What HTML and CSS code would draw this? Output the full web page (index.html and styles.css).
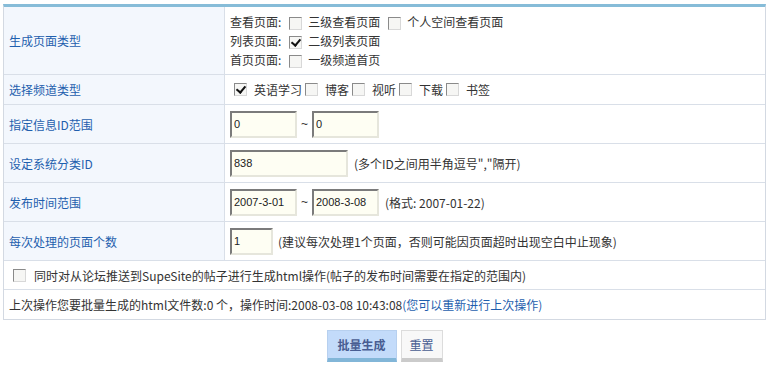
FILE: index.html
```html
<!DOCTYPE html>
<html lang="zh-CN">
<head>
<meta charset="utf-8">
<title>批量生成HTML</title>
<link rel="stylesheet" href="styles.css">
</head>
<body>
<div class="page">
  <div class="form">
    <div class="label r1">生成页面类型</div>
    <div class="field r1 stack">
      <div class="line">查看页面: <label class="opt"><input type="checkbox" class="cb">三级查看页面</label><label class="opt"><input type="checkbox" class="cb">个人空间查看页面</label></div>
      <div class="line">列表页面: <label class="opt"><input type="checkbox" class="cb" checked>二级列表页面</label></div>
      <div class="line">首页页面: <label class="opt"><input type="checkbox" class="cb">一级频道首页</label></div>
    </div>

    <div class="label r2">选择频道类型</div>
    <div class="field r2 channels">
      <label class="ch"><input type="checkbox" class="cb" checked>英语学习</label>
      <label class="ch"><input type="checkbox" class="cb">博客</label>
      <label class="ch"><input type="checkbox" class="cb">视听</label>
      <label class="ch"><input type="checkbox" class="cb">下载</label>
      <label class="ch"><input type="checkbox" class="cb">书签</label>
    </div>

    <div class="label r3">指定信息ID范围</div>
    <div class="field r3"><input class="txt w67" value="0"><span class="tilde">~</span><input class="txt w67" value="0"></div>

    <div class="label r3">设定系统分类ID</div>
    <div class="field r3"><input class="txt w118" value="838"><span class="hint">(多个ID之间用半角逗号","隔开)</span></div>

    <div class="label r3">发布时间范围</div>
    <div class="field r3"><input class="txt w67" value="2007-3-01"><span class="tilde">~</span><input class="txt w67" value="2008-3-08"><span class="hint h2">(格式: 2007-01-22)</span></div>

    <div class="label r3">每次处理的页面个数</div>
    <div class="field r3"><input class="txt w43" value="1"><span class="hint h3">(建议每次处理1个页面，否则可能因页面超时出现空白中止现象)</span></div>

    <div class="full r7"><label class="opt first"><input type="checkbox" class="cb">同时对从论坛推送到SupeSite的帖子进行生成html操作(帖子的发布时间需要在指定的范围内)</label></div>

    <div class="full r8 last">上次操作您要批量生成的html文件数:0 个，操作时间:2008-03-08 10:43:08 <a href="#" class="link">(您可以重新进行上次操作)</a></div>
  </div>

  <div class="actions">
    <button type="button" class="btn primary">批量生成</button>
    <button type="button" class="btn reset">重置</button>
  </div>
</div>
</body>
</html>
```

FILE: styles.css
```css
* { box-sizing: border-box; }
html, body { margin: 0; padding: 0; background: #fff; }
body {
  font-family: "Noto Sans CJK SC", "Liberation Sans", sans-serif;
  font-size: 12px;
  color: #333;
}
.page { padding: 4px 3px; }

.form {
  display: grid;
  grid-template-columns: 221px 1fr;
  border: 1px solid #d3d9e2;
  border-top: 3px solid #86bcd8;
}
.label {
  background: #f3f7fd;
  color: #1f5fae;
  border-right: 1px solid #d9dfe8;
  border-bottom: 1px solid #d9dfe8;
  padding-left: 5px;
  display: flex;
  align-items: center;
}
.field, .full {
  border-bottom: 1px solid #d9dfe8;
  padding-left: 5px;
  display: flex;
  align-items: center;
}
.full { grid-column: 1 / -1; }
.last { border-bottom: none; }

.r1 { height: 68px; }
.r2 { height: 30px; }
.r3 { height: 39px; }
.r7 { height: 29px; }
.r8 { height: 29px; }

.stack { flex-direction: column; align-items: flex-start; justify-content: center; }
.line { line-height: 19px; height: 19px; display: flex; align-items: center; }

.opt { display: inline-flex; align-items: center; }
.cb {
  appearance: none;
  -webkit-appearance: none;
  width: 13px;
  height: 13px;
  margin: 0 6px 0 8px;
  border: 1px solid;
  border-color: #8a8a8a #d8d8d8 #d8d8d8 #8a8a8a;
  background: #f6f6f4;
  position: relative;
  flex: none;
}
.cb:checked::after {
  content: "";
  position: absolute;
  left: 3px;
  top: 0px;
  width: 4px;
  height: 7px;
  border-right: 2px solid #111;
  border-bottom: 2px solid #111;
  transform: rotate(40deg);
}
.opt .cb { margin-top: 3px; }

.channels { padding-left: 9px; }
.ch { display: inline-flex; align-items: center; }
.ch .cb { margin: 0 7px 0 0; }
.ch + .ch .cb { margin-left: 3px; }

.first .cb { margin: 0 8px 0 4px; }

.txt {
  font-family: "Liberation Sans", sans-serif;
  font-size: 11px;
  color: #222;
  height: 27px;
  padding: 0 2px;
  background: #fefef3;
  border: 2px solid;
  border-color: #7b7b7b #e6e6dc #e6e6dc #7b7b7b;
  outline: none;
  margin: 0;
}
.w67 { width: 67px; }
.w118 { width: 118px; }
.w43 { width: 43px; }
.tilde { width: 15px; text-align: center; font-family: "Liberation Sans", sans-serif; }
.hint { margin-left: 6px; }
.h2 { margin-left: 6px; }
.h3 { margin-left: 5px; }

.link { color: #1f5fae; text-decoration: none; }

.actions {
  display: flex;
  justify-content: center;
  gap: 4px;
  margin-top: 10px;
}
.btn {
  font-family: "Noto Sans CJK SC", sans-serif;
  font-size: 12px;
  font-weight: bold;
  height: 32px;
  padding: 0;
  cursor: pointer;
}
.primary {
  width: 70px;
  background: #c3dbfa;
  color: #485d92;
  border: 1px solid #b7d0ef;
  border-bottom: 4px solid #82b6d8;
}
.reset {
  width: 42px;
  background: #f8f8f8;
  color: #485d92;
  font-weight: normal;
  border: 1px solid #dcdcdc;
  border-bottom: 4px solid #cbcbcb;
}
```
